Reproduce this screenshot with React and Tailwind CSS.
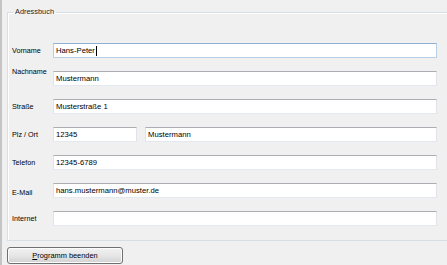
import React from 'react'

const rows = [
  { label: 'Vorname', value: 'Hans-Peter', focus: true },
  { label: 'Nachname', value: 'Mustermann', labelClass: 'self-start -mt-[4px]' },
  { label: 'Straße', value: 'Musterstraße 1' },
  { label: 'Plz / Ort', split: ['12345', 'Mustermann'] },
  { label: 'Telefon', value: '12345-6789' },
  { label: 'E-Mail', value: 'hans.mustermann@muster.de', labelClass: 'self-start mt-[5px]' },
  { label: 'Internet', value: '' },
]

const Field = ({ value, focus, className = '' }) => (
  <div
    className={`h-[15px] flex items-center pl-[2px] bg-white border text-[7.7px] ${
      focus
        ? 'border-[#b7d0e8] border-t-[#8fb1d3] bg-[#fbfdff]'
        : 'border-[#e2e3ea] border-t-[#abadb3] border-b-[#e3e9ef]'
    } ${className}`}
  >
    <span className="leading-[10px] whitespace-pre">{value}</span>
    {focus && <span className="w-px h-[10px] bg-black ml-[1px]" />}
  </div>
)

const App = () => {
  return (
    <div
      className="w-[447px] h-[265px] overflow-hidden bg-[#f0f0f0] border-l-2 border-[#c4c4c4] flex flex-col text-[7.4px] text-black"
      style={{ fontFamily: '"Liberation Sans", Arial, sans-serif' }}
    >
      <fieldset className="mt-[5px] ml-[5px] h-[236px] border border-r-0 border-[#d5dfe5] shadow-[inset_1px_1px_0_#ffffff] pr-[10px]">
        <legend className="ml-[5px] px-[2px] leading-[14px] text-[#1e1e1e]">Adressbuch</legend>

        <div className="flex flex-col gap-[13px] pt-[24px]">
          {rows.map((r) => (
            <div key={r.label} className="flex items-center h-[15px]">
              <div className={`w-[45px] shrink-0 pl-[4px] leading-[10px] text-[7.2px] ${r.labelClass || ''}`}>
                {r.label}
              </div>
              {r.split ? (
                <div className="flex-1 flex gap-[8px]">
                  <Field value={r.split[0]} className="w-[84px]" />
                  <Field value={r.split[1]} className="flex-1" />
                </div>
              ) : (
                <Field value={r.value} focus={r.focus} className="flex-1" />
              )}
            </div>
          ))}
        </div>
      </fieldset>

      <button
        type="button"
        className="mt-[6px] ml-[5px] w-[116px] h-[17px] rounded-[3px] border border-[#707070] bg-gradient-to-b from-[#f2f2f2] via-[#e6e6e6] to-[#d2d2d2] flex items-center justify-center leading-[10px] shadow-[inset_0_0_0_1px_#fcfcfc]"
      >
        <span>
          <span className="underline">P</span>rogramm beenden
        </span>
      </button>
    </div>
  )
}

export default App
